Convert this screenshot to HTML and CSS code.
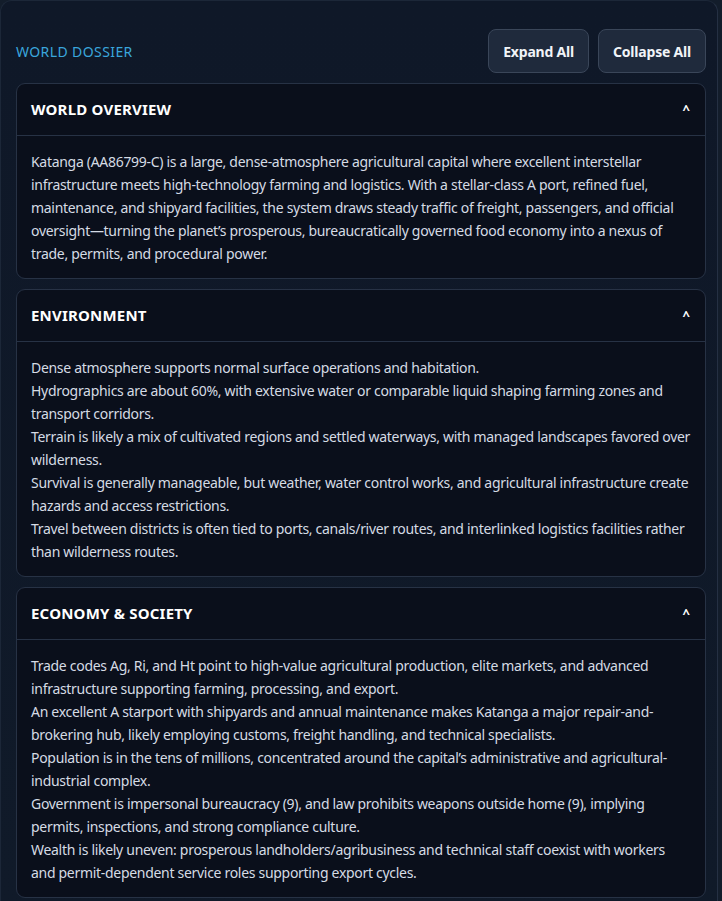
FILE: index.html
```html
<!DOCTYPE html>
<html>
    <head>
        <meta charset="utf-8">
        <link rel="stylesheet" href="styles.css">
    </head>
<body>
    <div class="dossier">
        <div class="topBar">
            <span class="label">WORLD DOSSIER</span>
            <div class="actions">
                <button class="btn">Expand All</button>
                <button class="btn">Collapse All</button>
            </div>
        </div>

        <div class="section">
            <div class="sectionHead">
                <span class="sectionTitle">WORLD OVERVIEW</span>
                <span class="caret">^</span>
            </div>
            <div class="sectionBody">
                <p>Katanga (AA86799-C) is a large, dense-atmosphere agricultural capital where excellent interstellar infrastructure meets high-technology farming and logistics. With a stellar-class A port, refined fuel, maintenance, and shipyard facilities, the system draws steady traffic of freight, passengers, and official oversight—turning the planet’s prosperous, bureaucratically governed food economy into a nexus of trade, permits, and procedural power.</p>
            </div>
        </div>

        <div class="section">
            <div class="sectionHead">
                <span class="sectionTitle">ENVIRONMENT</span>
                <span class="caret">^</span>
            </div>
            <div class="sectionBody">
                <p>Dense atmosphere supports normal surface operations and habitation.</p>
                <p>Hydrographics are about 60%, with extensive water or comparable liquid shaping farming zones and transport corridors.</p>
                <p>Terrain is likely a mix of cultivated regions and settled waterways, with managed landscapes favored over wilderness.</p>
                <p>Survival is generally manageable, but weather, water control works, and agricultural infrastructure create hazards and access restrictions.</p>
                <p>Travel between districts is often tied to ports, canals/river routes, and interlinked logistics facilities rather than wilderness routes.</p>
            </div>
        </div>

        <div class="section">
            <div class="sectionHead">
                <span class="sectionTitle">ECONOMY &amp; SOCIETY</span>
                <span class="caret">^</span>
            </div>
            <div class="sectionBody">
                <p>Trade codes Ag, Ri, and Ht point to high-value agricultural production, elite markets, and advanced infrastructure supporting farming, processing, and export.</p>
                <p>An excellent A starport with shipyards and annual maintenance makes Katanga a major repair-and-brokering hub, likely employing customs, freight handling, and technical specialists.</p>
                <p>Population is in the tens of millions, concentrated around the capital’s administrative and agricultural-industrial complex.</p>
                <p>Government is impersonal bureaucracy (9), and law prohibits weapons outside home (9), implying permits, inspections, and strong compliance culture.</p>
                <p>Wealth is likely uneven: prosperous landholders/agribusiness and technical staff coexist with workers and permit-dependent service roles supporting export cycles.</p>
            </div>
        </div>
    </div>
</body>
</html>
```
FILE: styles.css
```css
body {
    margin: 0;
    background-color: #131d2b;
    font-family: "Noto Sans", "Open Sans", sans-serif;
    color: #d5dbe4;
}

.dossier {
    width: 690px;
    margin: 0;
    padding: 28px 11px 16px 15px;
    background: linear-gradient(180deg, #0f1828 0%, #101a29 100%);
    border: 1px solid #1c2738;
    border-right-color: #253043;
    border-radius: 12px;
}

.topBar {
    display: flex;
    justify-content: space-between;
    align-items: center;
    margin-bottom: 10px;
}

.label {
    color: #3aa6dc;
    font-size: 14px;
    letter-spacing: 0.4px;
}

.actions {
    display: flex;
    gap: 9px;
}

.btn {
    height: 44px;
    padding: 0 14px;
    border: 1px solid #3a4659;
    border-radius: 8px;
    background-color: #1f2a3c;
    color: #f1f4f8;
    font-family: "Noto Sans", "Open Sans", sans-serif;
    font-size: 14px;
    font-weight: bold;
    letter-spacing: -0.2px;
}

.section {
    background-color: #0a0f1b;
    border: 1px solid #273245;
    border-radius: 9px;
    margin-bottom: 10px;
}

.sectionHead {
    display: flex;
    justify-content: space-between;
    align-items: center;
    box-sizing: border-box;
    height: 52px;
    padding: 0 15px 1px 14px;
    border-bottom: 1px solid #273245;
}

.sectionTitle {
    color: #ffffff;
    font-size: 15px;
    font-weight: bold;
    letter-spacing: 0.2px;
}

.caret {
    color: #ffffff;
    font-size: 13px;
    font-weight: bold;
}

.sectionBody {
    padding: 14px 14px 13px 14px;
    font-size: 14px;
    line-height: 23px;
    letter-spacing: -0.3px;
}

.sectionBody p {
    margin: 0;
}
```
